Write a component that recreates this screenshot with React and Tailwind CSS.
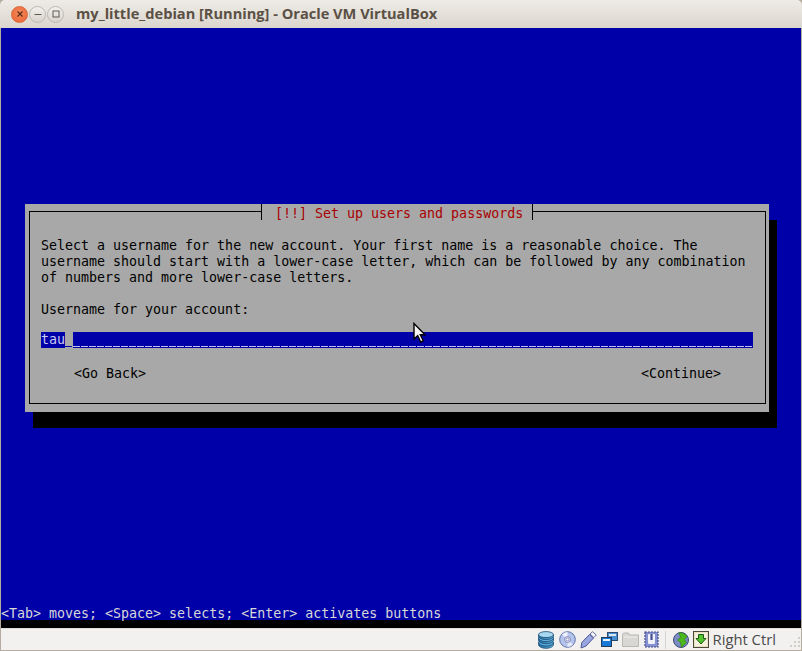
const consoleFont = "font-['DejaVu_Sans_Mono','Liberation_Mono',monospace]"

// dashes of the entry field, one per character cell
const dashes =
  'bg-[repeating-linear-gradient(90deg,#c0c0e8_0,#c0c0e8_7px,transparent_7px,transparent_8px)] bg-[length:100%_1px] bg-[position:0_14px] bg-no-repeat'

function WindowButton({ children, close }) {
  return (
    <div
      className={
        close
          ? 'flex h-[17px] w-[17px] items-center justify-center rounded-full border border-[#d9683a] bg-[radial-gradient(circle_at_50%_40%,#f28a5c,#ec6130)]'
          : 'flex h-[17px] w-[17px] items-center justify-center rounded-full border border-[#bdb9b1] bg-[linear-gradient(#f2f0ec,#d8d4cc)]'
      }
    >
      {children}
    </div>
  )
}

function TitleBar() {
  return (
    <div className="flex h-[28px] items-center rounded-t-[5px] bg-[linear-gradient(#eeebe6,#dbd6ce)] pl-[11px]">
      <div className="flex gap-[1px]">
        <WindowButton close>
          <svg width="8" height="8" viewBox="0 0 8 8" stroke="#5a2c18" strokeWidth="1.2">
            <path d="M1.5 1.500l5 5M6.500 1.500l-5 5" />
          </svg>
        </WindowButton>
        <WindowButton>
          <svg width="8" height="8" viewBox="0 0 8 8" stroke="#5f5a52" strokeWidth="1">
            <path d="M0.500 4.500h7" />
          </svg>
        </WindowButton>
        <WindowButton>
          <svg width="8" height="8" viewBox="0 0 8 8" fill="none" stroke="#5f5a52" strokeWidth="1">
            <rect x="1" y="1" width="6" height="6" />
          </svg>
        </WindowButton>
      </div>
      <div className="ml-[12px] font-['Open_Sans',sans-serif] text-[14.6px] font-bold text-[#5b5045]">
        my_little_debian [Running] - Oracle VM VirtualBox
      </div>
    </div>
  )
}

function Dialog() {
  return (
    <div className="relative ml-[24px] mt-[176px] h-[208px] w-[744px] bg-[#a8a8a8] pl-[4px] pr-[3px] pt-[7px] shadow-[8px_16px_0_#000]">
      <div className="h-[193px] border border-black px-[11px] pt-[26px] text-black">
        <p className="whitespace-pre">{'Select a username for the new account. Your first name is a reasonable choice. The\nusername should start with a lower-case letter, which can be followed by any combination\nof numbers and more lower-case letters.'}</p>
        <p className="mt-[16px]">Username for your account:</p>
        <div className="mt-[14px] flex h-[16px] w-[712px] bg-[#0000a8]">
          <span className="w-[24px] text-[#c8c8f0]">tau</span>
          <span className="w-[8px] bg-[#a8a8a8] bg-[linear-gradient(#0000a8,#0000a8)] bg-[length:7px_1px] bg-[position:0_14px] bg-no-repeat" />
          <span className={`flex-1 ${dashes}`} />
        </div>
        <div className="mt-[18px] flex justify-between px-[33px]">
          <span>&lt;Go Back&gt;</span>
          <span>&lt;Continue&gt;</span>
        </div>
      </div>
      <div className="absolute left-[236px] top-0 h-[16px] border-x border-black bg-[#a8a8a8] pl-[13px] pr-[9px] pt-[1px] text-[#a80000]">
        <span className="relative top-[1px]">[!!] Set up users and passwords</span>
      </div>
    </div>
  )
}

function Cursor() {
  return (
    <svg className="absolute left-[411px] top-[294px]" width="15" height="22" viewBox="0 0 15 22">
      <path d="M2 1.500v15.500l3.700-3.300 3 6.300 2.600-1.200-3-6h4.700z" fill="#f4f4f4" stroke="#000" strokeWidth="1.400" />
    </svg>
  )
}

function StatusIcons() {
  return (
    <div className="flex items-center">
      {/* hard disks */}
      <svg width="16" height="18" viewBox="0 0 16 18">
        <defs>
          <linearGradient id="hd" x1="0" x2="1" y1="0" y2="0">
            <stop offset="0" stopColor="#1d6ea8" />
            <stop offset="1" stopColor="#5fb0de" />
          </linearGradient>
        </defs>
        <path d="M.5 12v1.500c0 2 3.300 3.800 7.500 3.800s7.500-1.800 7.500-3.800V12z" fill="url(#hd)" stroke="#1a4a70" strokeWidth=".8" />
        <ellipse cx="8" cy="11.500" rx="7.500" ry="3.600" fill="#5aa8d8" stroke="#1a4a70" strokeWidth=".8" />
        <path d="M.5 7.500V9c0 2 3.300 3.600 7.500 3.600s7.500-1.600 7.500-3.600V7.500z" fill="url(#hd)" stroke="#1a4a70" strokeWidth=".8" />
        <ellipse cx="8" cy="7" rx="7.500" ry="3.600" fill="#6ab4e0" stroke="#1a4a70" strokeWidth=".8" />
        <path d="M.5 3.500V5c0 2 3.300 3.600 7.500 3.600S15.500 7 15.500 5V3.500z" fill="url(#hd)" stroke="#1a4a70" strokeWidth=".8" />
        <ellipse cx="8" cy="3.600" rx="7.500" ry="3" fill="#a8d8f0" stroke="#1a4a70" strokeWidth=".8" />
      </svg>
      {/* optical disk */}
      <svg className="ml-[5px]" width="17" height="17" viewBox="0 0 17 17">
        <circle cx="8.500" cy="8.500" r="7.800" fill="#b4c4ea" stroke="#5a70a8" />
        <path d="M8.500 8.500L3 3.500A7.500 7.500 0 0 1 8.500 1z" fill="#eef2fc" />
        <path d="M8.500 8.500l5.500 5a7.500 7.500 0 0 1-5.500 2.500z" fill="#e4eafa" />
        <circle cx="8.500" cy="8.500" r="3" fill="#e8d8f0" stroke="#5a70a8" strokeWidth=".7" />
        <circle cx="8.500" cy="8.500" r="1.300" fill="#fff" stroke="#5a70a8" strokeWidth=".6" />
      </svg>
      {/* usb */}
      <svg className="ml-[4px]" width="17" height="18" viewBox="0 0 17 18">
        <path d="M1 17l.8-5.500L9.500 3.500l4 3.500-7.500 8z" fill="#9aa6e0" stroke="#4c5796" />
        <path d="M10 3l2.500-2.300 3.800 3.300-2.500 2.600z" fill="#f4f5fb" stroke="#6a7096" />
      </svg>
      {/* network */}
      <svg className="ml-[4px]" width="17" height="17" viewBox="0 0 17 17">
        <rect x="6.500" y="1.500" width="10" height="8" fill="#4a8ed0" stroke="#2c4a70" />
        <rect x="8" y="3" width="7" height="2" fill="#d8e8f6" />
        <rect x=".5" y="6.500" width="10" height="9" fill="#1878d8" stroke="#243c5c" />
        <rect x="2" y="8" width="7" height="2" fill="#e8f2fc" />
      </svg>
      {/* shared folders */}
      <svg className="ml-[4px]" width="17" height="15" viewBox="0 0 17 15">
        <path d="M.5 2.500l1-1.500h5l1 2h9v11.500H.5z" fill="#d8d7d3" stroke="#b8b7b2" />
        <path d="M1.500 5h14" stroke="#f0efec" />
      </svg>
      {/* video capture */}
      <svg className="ml-[5px]" width="15" height="17" viewBox="0 0 15 17">
        <rect x="1" y="1" width="13" height="15" fill="#8490d0" stroke="#454e90" strokeWidth="1.200" strokeDasharray="2 1" />
        <rect x="4" y="3" width="7" height="10" rx="1" fill="#f0f1fa" />
        <path d="M7.500 3v6" stroke="#454e90" strokeWidth="2.200" />
      </svg>
      <div className="ml-[6px] h-[18px] w-px bg-[#d5d3cf]" />
      {/* machine state */}
      <svg className="ml-[7px]" width="16" height="18" viewBox="0 0 16 18">
        <circle cx="8" cy="9" r="7.500" fill="#7c8cc4" stroke="#3c4878" />
        <path d="M6 1.500c3 0 6 1 8 4l-2.500 3 2 3-5 5-1-5-3-2.500 3-2.500z" fill="#4cb81c" stroke="#2a7a10" strokeWidth=".6" />
      </svg>
      {/* host key */}
      <svg className="ml-[4px]" width="16" height="17" viewBox="0 0 16 17">
        <rect x=".5" y=".5" width="15" height="16" fill="#e8e0c0" stroke="#4c4838" />
        <rect x="2" y="2" width="12" height="13" fill="#f4f0dc" />
        <path d="M5.500 3.500h5v4h2.500L8 13 3 7.500h2.500z" fill="#52c42e" stroke="#1f5a12" />
      </svg>
    </div>
  )
}

function Grip() {
  return (
    <div className="grid grid-cols-3 gap-[2px] self-end pb-[3px]">
      <span />
      <span />
      <span className="h-[2px] w-[2px] bg-[#d0cec9]" />
      <span />
      <span className="h-[2px] w-[2px] bg-[#d0cec9]" />
      <span className="h-[2px] w-[2px] bg-[#d0cec9]" />
      <span className="h-[2px] w-[2px] bg-[#d0cec9]" />
      <span className="h-[2px] w-[2px] bg-[#d0cec9]" />
      <span className="h-[2px] w-[2px] bg-[#d0cec9]" />
    </div>
  )
}

function StatusBar() {
  return (
    <div className="flex h-[22px] items-center justify-end border-t border-[#e2dfda] bg-[#f2f1f0] pr-[1px]">
      <StatusIcons />
      <span className="ml-[4px] font-['Open_Sans',sans-serif] text-[14.8px] text-[#4a4a4a]">Right Ctrl</span>
      <div className="ml-[14px] flex h-full">
        <Grip />
      </div>
    </div>
  )
}

export default function App() {
  return (
    <div className="h-[651px] w-[802px] overflow-hidden bg-[#b5aca0]">
      <TitleBar />
      <div className="px-px">
        <div className={`relative flex h-[592px] flex-col justify-between bg-[#0000a8] text-[13.3px] leading-[16px] ${consoleFont}`}>
          <Dialog />
          <div className="h-[16px] pt-[2px] text-[#d8d8d8]">
            &lt;Tab&gt; moves; &lt;Space&gt; selects; &lt;Enter&gt; activates buttons
          </div>
          <Cursor />
        </div>
        <div className="h-[8px] bg-black" />
        <StatusBar />
      </div>
    </div>
  )
}
